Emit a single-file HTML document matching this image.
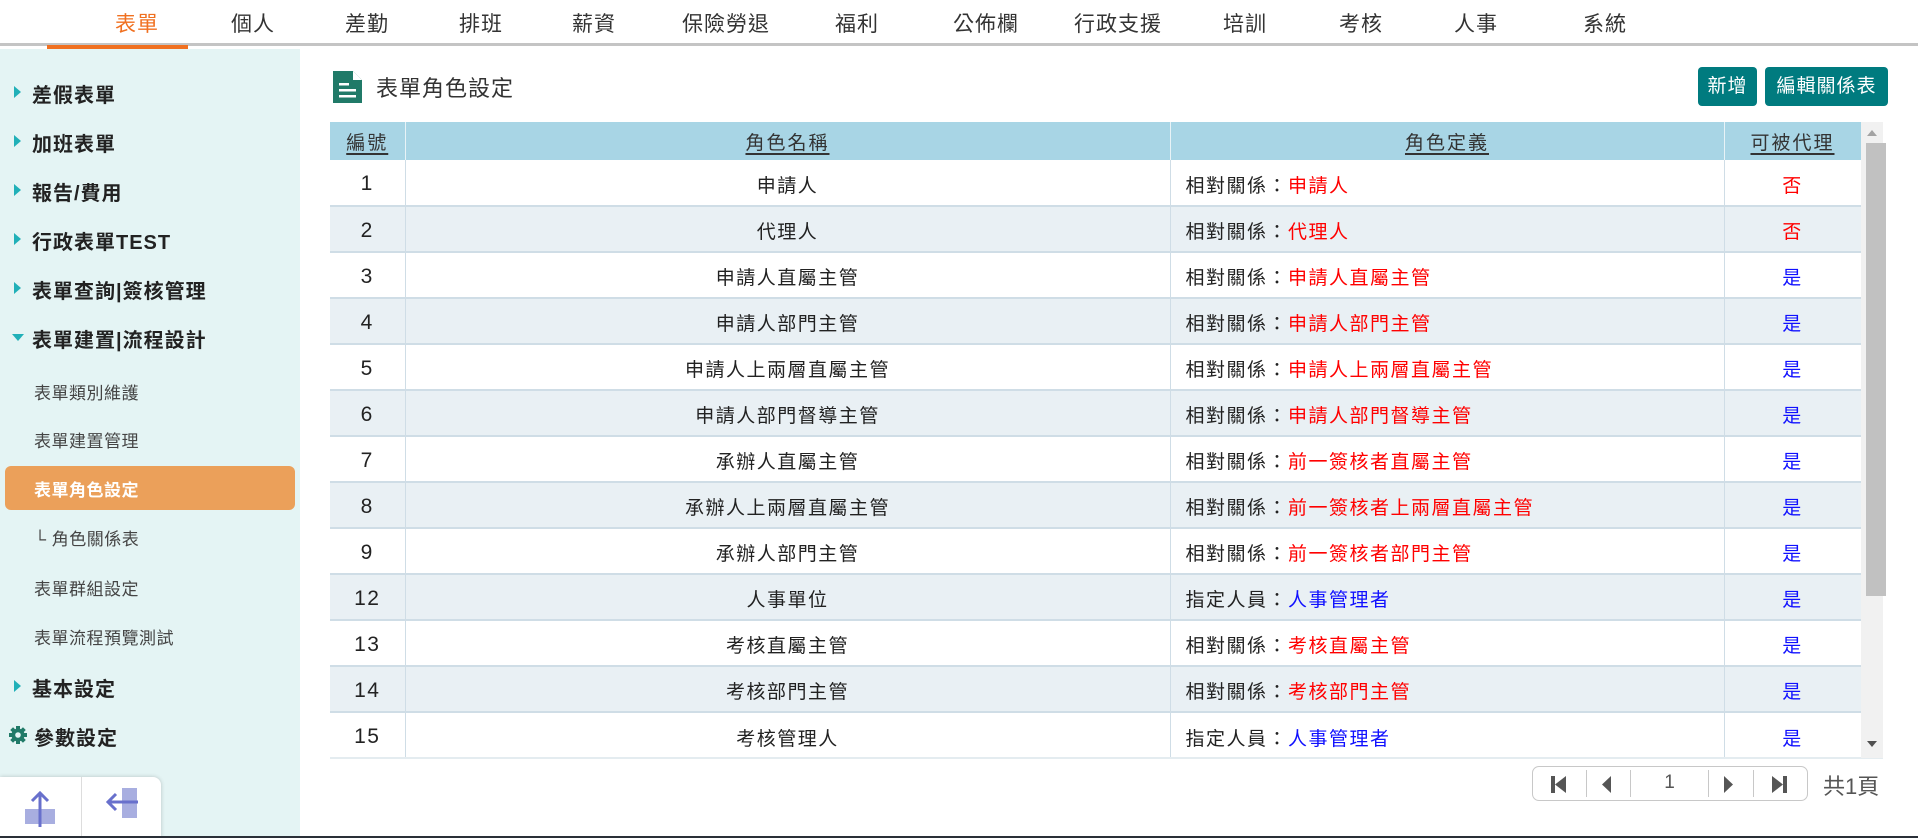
<!DOCTYPE html>
<html><head><meta charset="utf-8"><style>
*{margin:0;padding:0;box-sizing:border-box}
body{width:1918px;height:838px;overflow:hidden;background:#fff;font-family:"Liberation Sans","Noto Sans CJK TC",sans-serif;position:relative;color:#222}
.nav{position:absolute;left:0;top:0;width:1918px;height:46px;border-bottom:3px solid #c4c4c4}
.nav span{position:absolute;top:8px;font-size:21px;transform:translateX(-50%);color:#333;letter-spacing:1px}
.nav .on{color:#f07020}
.ul{position:absolute;left:47px;top:45px;width:141px;height:4px;background:#f07020}
.side{position:absolute;left:0;top:49px;width:300px;height:789px;background:#e4f4f4}
.side .m{position:absolute;left:32px;font-size:20px;font-weight:bold;color:#222;letter-spacing:1px}
.side .m:before{content:"";position:absolute;left:-18px;top:7px;border-left:7px solid #20b0b8;border-top:6px solid transparent;border-bottom:6px solid transparent}
.side .m.open:before{left:-20px;top:10px;border-top:7px solid #20b0b8;border-left:6px solid transparent;border-right:6px solid transparent;border-bottom:0}
.side .s{position:absolute;left:34px;font-size:17px;color:#444;letter-spacing:.5px}
.act{position:absolute;left:5px;top:417px;width:290px;height:44px;background:#eba05a;border-radius:6px}
.box{position:absolute;left:0;top:777px;width:161px;height:61px;background:#fff;border-radius:0 8px 0 0;box-shadow:0 0 4px rgba(0,0,0,.2)}
table{position:absolute;left:330px;top:122px;width:1531px;border-collapse:collapse;font-size:19px;table-layout:fixed}
th{background:#a8d5e5;height:38px;font-weight:normal;color:#333;letter-spacing:2px;border-right:1px solid #e8f3f7}
th u{text-decoration:underline;text-decoration-thickness:2px;text-underline-offset:4px}
td{height:46px;border-right:1px solid #cfdde6;border-bottom:2px solid #cfdde6;text-align:center;letter-spacing:1.5px;padding-top:3px}
td.n{font-size:21px}
tr:nth-child(odd) td{background:#e9f0f4}
td.d{text-align:left;padding-left:15px}
.r{color:#f00}.b{color:#1010ff}
.btn{position:absolute;top:67px;height:39px;background:#007b7f;color:#fff;border-radius:4px;font-size:19px;line-height:39px;text-align:center;letter-spacing:1px}
.pg{position:absolute;left:1532px;top:766px;width:276px;height:35px;border:1px solid #c8c8c8;border-radius:7px}
.pg div{position:absolute;top:3px;bottom:3px;border-left:1px solid #c8c8c8}
</style></head><body>
<div class="nav">
<span class="on" style="left:137px">表單</span><span style="left:253px">個人</span><span style="left:367px">差勤</span><span style="left:481px">排班</span><span style="left:594px">薪資</span><span style="left:726px">保險勞退</span><span style="left:857px">福利</span><span style="left:986px">公佈欄</span><span style="left:1118px">行政支援</span><span style="left:1245px">培訓</span><span style="left:1361px">考核</span><span style="left:1476px">人事</span><span style="left:1605px">系統</span>
</div>
<div class="ul"></div>
<div class="side">
<div class="m" style="top:30px">差假表單</div>
<div class="m" style="top:79px">加班表單</div>
<div class="m" style="top:128px">報告/費用</div>
<div class="m" style="top:177px">行政表單TEST</div>
<div class="m" style="top:226px">表單查詢|簽核管理</div>
<div class="m open" style="top:275px">表單建置|流程設計</div>
<div class="s" style="top:330px">表單類別維護</div>
<div class="s" style="top:378px">表單建置管理</div>
<div class="act"></div>
<div class="s" style="top:427px;color:#fff;font-weight:bold">表單角色設定</div>
<div class="s" style="top:476px">└ 角色關係表</div>
<div class="s" style="top:526px">表單群組設定</div>
<div class="s" style="top:575px">表單流程預覽測試</div>
<div class="m" style="top:624px">基本設定</div>
<div class="m" style="top:673px;left:34px;">參數設定<svg style="position:absolute;left:-26px;top:3px" width="20" height="20" viewBox="0 0 20 20"><g fill="#207a68"><circle cx="10" cy="10" r="6.5"/><rect x="8" y="1" width="4" height="18"/><rect x="1" y="8" width="18" height="4"/><rect x="8" y="1" width="4" height="18" transform="rotate(45 10 10)"/><rect x="8" y="1" width="4" height="18" transform="rotate(-45 10 10)"/></g><circle cx="10" cy="10" r="2.8" fill="#e4f4f4"/></svg></div>
</div>
<div class="box"><div style="position:absolute;left:81px;top:0;bottom:0;border-left:1px solid #ddd"></div>
<svg style="position:absolute;left:24px;top:12px" width="32" height="40"><rect x="1" y="20" width="30" height="15" fill="#a8aee0"/><path d="M16 38V4M8 12l8-8 8 8" stroke="#6870cc" stroke-width="3" fill="none"/></svg>
<svg style="position:absolute;left:104px;top:10px" width="36" height="36"><rect x="18" y="1" width="15" height="30" fill="#a8aee0"/><path d="M34 15H4M12 7l-8 8 8 8" stroke="#6870cc" stroke-width="3" fill="none"/></svg>
</div>
<svg style="position:absolute;left:333px;top:71px" width="29" height="32" viewBox="0 0 29 32"><path d="M0 0H20L29 9V32H0Z" fill="#207a68"/><path d="M20 0V9H29" fill="#fff"/><rect x="6" y="12" width="10" height="2.5" fill="#fff"/><rect x="6" y="18" width="17" height="2.5" fill="#fff"/><rect x="6" y="24" width="17" height="2.5" fill="#fff"/></svg>
<div style="position:absolute;left:376px;top:71px;font-size:22px;color:#333;letter-spacing:1px">表單角色設定</div>
<div class="btn" style="left:1698px;width:59px">新增</div>
<div class="btn" style="left:1765px;width:123px">編輯關係表</div>
<table>
<colgroup><col style="width:75px"><col style="width:765px"><col style="width:554px"><col style="width:137px"></colgroup>
<tr><th><u>編號</u></th><th><u>角色名稱</u></th><th><u>角色定義</u></th><th><u>可被代理</u></th></tr>
<tr><td class="n">1</td><td>申請人</td><td class="d">相對關係：<span class="r">申請人</span></td><td class="r">否</td></tr>
<tr><td class="n">2</td><td>代理人</td><td class="d">相對關係：<span class="r">代理人</span></td><td class="r">否</td></tr>
<tr><td class="n">3</td><td>申請人直屬主管</td><td class="d">相對關係：<span class="r">申請人直屬主管</span></td><td class="b">是</td></tr>
<tr><td class="n">4</td><td>申請人部門主管</td><td class="d">相對關係：<span class="r">申請人部門主管</span></td><td class="b">是</td></tr>
<tr><td class="n">5</td><td>申請人上兩層直屬主管</td><td class="d">相對關係：<span class="r">申請人上兩層直屬主管</span></td><td class="b">是</td></tr>
<tr><td class="n">6</td><td>申請人部門督導主管</td><td class="d">相對關係：<span class="r">申請人部門督導主管</span></td><td class="b">是</td></tr>
<tr><td class="n">7</td><td>承辦人直屬主管</td><td class="d">相對關係：<span class="r">前一簽核者直屬主管</span></td><td class="b">是</td></tr>
<tr><td class="n">8</td><td>承辦人上兩層直屬主管</td><td class="d">相對關係：<span class="r">前一簽核者上兩層直屬主管</span></td><td class="b">是</td></tr>
<tr><td class="n">9</td><td>承辦人部門主管</td><td class="d">相對關係：<span class="r">前一簽核者部門主管</span></td><td class="b">是</td></tr>
<tr><td class="n">12</td><td>人事單位</td><td class="d">指定人員：<span class="b">人事管理者</span></td><td class="b">是</td></tr>
<tr><td class="n">13</td><td>考核直屬主管</td><td class="d">相對關係：<span class="r">考核直屬主管</span></td><td class="b">是</td></tr>
<tr><td class="n">14</td><td>考核部門主管</td><td class="d">相對關係：<span class="r">考核部門主管</span></td><td class="b">是</td></tr>
<tr><td class="n" style="border-bottom:0;height:40px">15</td><td style="border-bottom:0">考核管理人</td><td class="d" style="border-bottom:0">指定人員：<span class="b">人事管理者</span></td><td class="b" style="border-bottom:0">是</td></tr>
</table>
<div style="position:absolute;left:330px;top:757px;width:1553px;height:2px;background:#e4ecf0"></div>
<div style="position:absolute;left:1861px;top:122px;width:22px;height:636px;background:#f1f1f1"></div>
<div style="position:absolute;left:1866px;top:143px;width:20px;height:453px;background:#c1c1c1"></div>
<div style="position:absolute;left:1867px;top:130px;border-bottom:6px solid #a3a3a3;border-left:5px solid transparent;border-right:5px solid transparent"></div>
<div style="position:absolute;left:1867px;top:741px;border-top:6px solid #505050;border-left:5px solid transparent;border-right:5px solid transparent"></div>
<div class="pg">
<div style="left:53px"></div><div style="left:97px"></div><div style="left:175px"></div><div style="left:220px"></div>
<svg style="position:absolute;left:18px;top:9px" width="16" height="17"><rect x="0" y="0" width="4" height="17" fill="#555"/><path d="M15 0V17L4 8.5Z" fill="#555"/></svg>
<svg style="position:absolute;left:69px;top:9px" width="10" height="17"><path d="M9 0V17L0 8.5Z" fill="#555"/></svg>
<div style="position:absolute;left:97px;width:78px;top:5px;text-align:center;font-size:19px;color:#555">1</div>
<svg style="position:absolute;left:191px;top:9px" width="10" height="17"><path d="M0 0V17L9 8.5Z" fill="#555"/></svg>
<svg style="position:absolute;left:239px;top:9px" width="16" height="17"><path d="M0 0V17L11 8.5Z" fill="#555"/><rect x="11" y="0" width="4" height="17" fill="#555"/></svg>
</div>
<div style="position:absolute;left:1823px;top:769px;font-size:22px;color:#555">共1頁</div>
<div style="position:absolute;left:0;top:836px;width:1918px;height:2px;background:#2a3038"></div>
</body></html>
